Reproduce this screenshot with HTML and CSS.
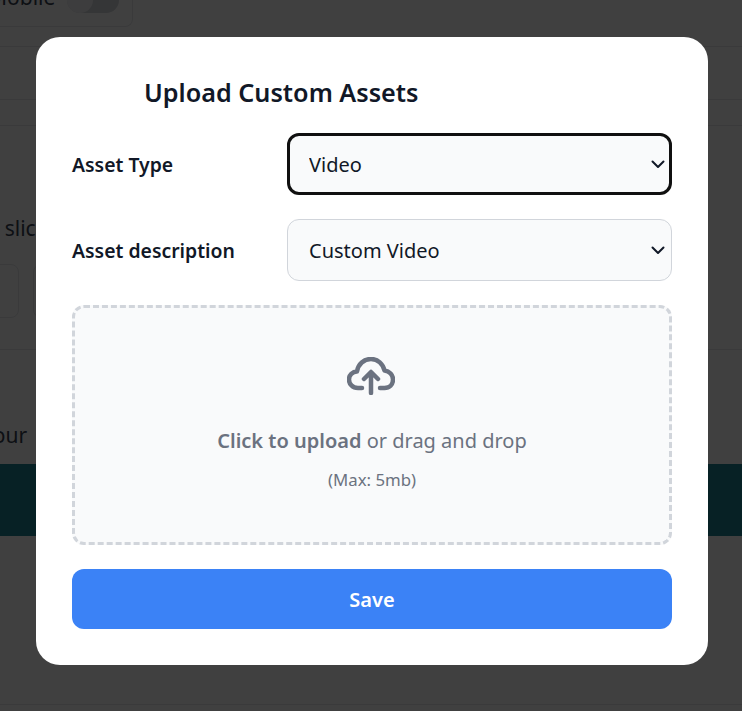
FILE: index.html
```html
<!DOCTYPE html>
<html lang="en">
<head>
  <meta charset="UTF-8" />
  <meta name="viewport" content="width=device-width, initial-scale=1.0" />
  <title>Upload Custom Assets</title>
  <link rel="stylesheet" href="styles.css">
</head>
<body>
  <main class="page">
    <div class="mobile-row">
      <div class="mobile-card">
        <span class="mobile-label">Mobile</span>
        <span class="toggle"><span class="toggle-knob"></span></span>
      </div>
    </div>
    <div class="rule-row"></div>
    <div class="rule-row rule-row-short"></div>
    <div class="slider-section">
      <p class="page-text">Use slices</p>
      <div class="slider-boxes">
        <div class="slider-box"></div>
        <div class="slider-box"></div>
      </div>
    </div>
    <div class="colour-section">
      <p class="page-text">Your</p>
      <div class="banner"></div>
    </div>
  </main>

  <div class="overlay">
    <div class="modal">
      <h2 class="modal-title">Upload Custom Assets</h2>

      <div class="field">
        <label class="field-label" for="asset-type">Asset Type</label>
        <select id="asset-type" class="field-select field-select-active">
          <option>Video</option>
          <option>Image</option>
        </select>
      </div>

      <div class="field">
        <label class="field-label" for="asset-description">Asset description</label>
        <select id="asset-description" class="field-select">
          <option>Custom Video</option>
        </select>
      </div>

      <div class="drop-zone">
        <svg class="drop-icon" viewBox="0 0 48 38" fill="none" stroke="currentColor" stroke-width="4.500" stroke-linecap="round" stroke-linejoin="round">
          <path d="M15 31H11C5.500 31 2 27 2 22.500C2 18 5.500 14.500 10 14.500C11 7 17 2 24 2C31 2 36 7 37.500 13.500C42.500 14 46 18 46 22.500C46 27.500 42.500 31 37.500 31H33" />
          <path d="M24 36V15.500M17 22L24 15L31 22" />
        </svg>
        <p class="drop-text"><strong>Click to upload</strong> or drag and drop</p>
        <p class="drop-hint">(Max: 5mb)</p>
      </div>

      <button class="save-btn">Save</button>
    </div>
  </div>
</body>
</html>
```

FILE: styles.css
```css
* {
  box-sizing: border-box;
}

html, body {
  height: 100%;
}

body {
  margin: 0;
  overflow: hidden;
  font-family: "Noto Sans", "Open Sans", sans-serif;
  color: #111827;
  background-color: #fff;
}

.page {
  height: 711px;
  overflow: hidden;
}

.mobile-row {
  height: 47px;
  border-bottom: 1px solid #e5e7eb;
}

.mobile-card {
  display: flex;
  align-items: flex-start;
  gap: 12px;
  width: 133px;
  height: 27px;
  border: 1px solid #e5e7eb;
  border-top: none;
  border-left: none;
  border-radius: 0 0 8px 0;
}

.mobile-label {
  margin-top: -17px;
  margin-left: -12px;
  font-size: 21px;
  line-height: 28px;
  color: #374151;
}

.toggle {
  width: 52px;
  height: 26px;
  margin-top: -13px;
  border-radius: 13px;
  background-color: #d1d5db;
}

.toggle-knob {
  display: block;
  width: 26px;
  height: 26px;
  border-radius: 50%;
  background-color: #f3f4f6;
}

.rule-row {
  height: 53px;
  border-bottom: 1px solid #e5e7eb;
}

.rule-row-short {
  height: 26px;
}

.slider-section {
  height: 224px;
  padding-top: 88px;
  border-bottom: 1px solid #e5e7eb;
}

.page-text {
  margin: 0;
  font-size: 21px;
  line-height: 28px;
  color: #374151;
  white-space: nowrap;
}

.slider-section .page-text {
  margin-left: -38px;
}

.slider-boxes {
  display: flex;
  gap: 14px;
  margin-top: 22px;
  margin-left: -10px;
}

.slider-box {
  width: 29px;
  height: 54px;
  border: 1px solid #e5e7eb;
  border-radius: 8px;
}

.colour-section {
  padding-top: 71px;
  padding-bottom: 168px;
  border-bottom: 1px solid #e5e7eb;
}

.colour-section .page-text {
  margin-left: -18px;
}

.banner {
  height: 72px;
  margin-top: 15px;
  background-color: #1d8494;
}

.overlay {
  position: fixed;
  inset: 0;
  display: flex;
  align-items: flex-start;
  justify-content: flex-start;
  padding: 37px 0 0 36px;
  background-color: rgba(0, 0, 0, 0.75);
}

.modal {
  width: 672px;
  height: 628px;
  padding: 36px;
  border-radius: 24px;
  background-color: #fff;
}

.modal-title {
  margin: -1px 0 21px 72px;
  font-size: 25.200px;
  line-height: 40px;
  font-weight: 600;
  color: #111827;
}

.field {
  display: flex;
  align-items: center;
  height: 62px;
  margin-bottom: 24px;
}

.field-label {
  width: 215px;
  font-size: 19.400px;
  font-weight: 600;
  color: #111827;
}

.field-select {
  flex: 1;
  height: 62px;
  padding: 0 40px 0 21px;
  appearance: none;
  border: 1px solid #d1d5db;
  border-radius: 12px;
  font-family: inherit;
  font-size: 20px;
  color: #111827;
  background-color: #f9fafb;
  background-image: url("data:image/svg+xml,%3Csvg xmlns='http://www.w3.org/2000/svg' viewBox='0 0 14 9' fill='none' stroke='%23111827' stroke-width='2' stroke-linecap='round' stroke-linejoin='round'%3E%3Cpath d='M1.500 1.500L7 7L12.500 1.500'/%3E%3C/svg%3E");
  background-repeat: no-repeat;
  background-position: right 6px center;
  background-size: 14px 9px;
}

.field-select-active {
  border: 3px solid #101010;
  padding-left: 19px;
  background-position: right 4px center;
}

.drop-zone {
  display: flex;
  flex-direction: column;
  align-items: center;
  height: 240px;
  padding-top: 49px;
  border: 3px dashed #d1d5db;
  border-radius: 12px;
  background-color: #f9fafb;
  color: #6b7280;
}

.drop-icon {
  width: 48px;
  height: 38px;
  margin-right: 2px;
  margin-bottom: 32px;
}

.drop-text {
  margin: 0 0 13px;
  font-size: 20px;
  line-height: 28px;
}

.drop-text strong {
  font-weight: 600;
}

.drop-hint {
  margin: 0;
  font-size: 16.800px;
  line-height: 24px;
}

.save-btn {
  display: block;
  width: 100%;
  height: 60px;
  margin-top: 24px;
  border: none;
  border-radius: 12px;
  font-family: inherit;
  font-size: 20px;
  font-weight: 600;
  color: #fff;
  background-color: #3b82f6;
}
```
